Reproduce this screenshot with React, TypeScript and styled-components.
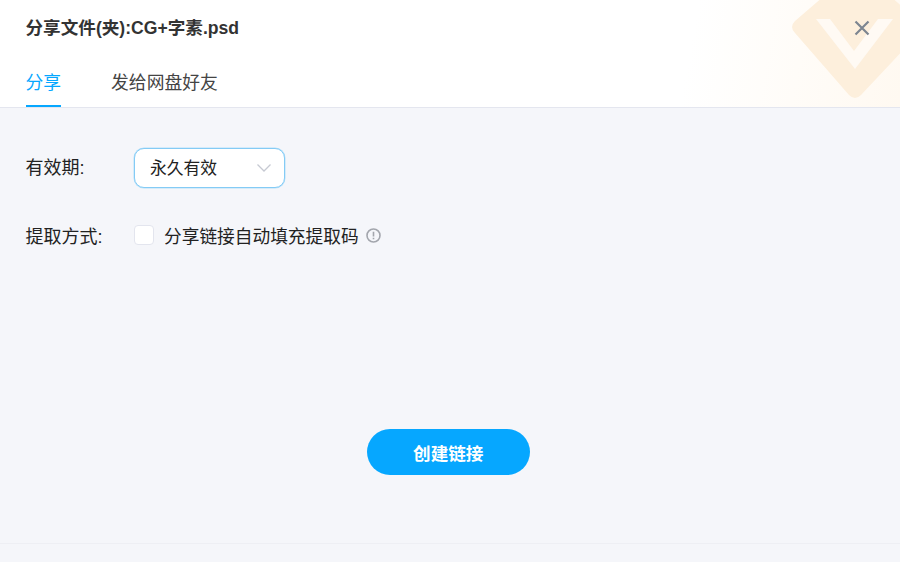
import React from "react";
import styled, { createGlobalStyle } from "styled-components";

const Global = createGlobalStyle`
  html, body { margin: 0; padding: 0; background: #f5f6fa; }
  body { font-family: "Liberation Sans", "Noto Sans CJK SC", sans-serif; }
`;

const Dialog = styled.div`
  width: 900px;
  height: 562px;
  display: flex;
  flex-direction: column;
  overflow: hidden;
  background: #f5f6fa;
`;

const Header = styled.header`
  position: relative;
  height: 107px;
  flex: none;
  border-bottom: 1px solid #e4e6ef;
  padding: 0 25.5px;
  background: linear-gradient(100deg, #ffffff 76%, #fff9f1 100%);
  overflow: hidden;
  display: flex;
  flex-direction: column;
`;

const Decoration = styled.svg`
  position: absolute;
  right: 0;
  top: 0;
`;

const Title = styled.h1`
  margin: 0;
  padding-top: 16px;
  height: 24px;
  line-height: 24px;
  font-size: 17.6px;
  font-weight: 700;
  color: #333333;
  position: relative;
`;

const CloseButton = styled.button`
  position: absolute;
  right: 29px;
  top: 19px;
  width: 18px;
  height: 18px;
  padding: 0;
  border: 0;
  background: none;
  display: flex;
`;

const Tabs = styled.nav`
  display: flex;
  gap: 50px;
  margin-top: 27px;
  position: relative;
`;

const Tab = styled.div<{ $active?: boolean }>`
  height: 40px;
  line-height: 32px;
  box-sizing: border-box;
  font-size: 17.8px;
  color: ${(p) => (p.$active ? "#06a7ff" : "#444444")};
  border-bottom: 2px solid ${(p) => (p.$active ? "#06a7ff" : "transparent")};
`;

const Body = styled.main`
  flex: 1;
  padding: 40px 29px 0 25.5px;
  display: flex;
  flex-direction: column;
`;

const Row = styled.div<{ $gap: number }>`
  display: flex;
  align-items: center;
  margin-bottom: ${(p) => p.$gap}px;
`;

const Label = styled.div<{ $lift: number }>`
  width: 108.5px;
  flex: none;
  font-size: 18px;
  color: #222222;
  padding-bottom: ${(p) => p.$lift}px;
`;

const Select = styled.div`
  width: 151px;
  height: 40px;
  box-sizing: border-box;
  border: 1px solid #84cbf5;
  box-shadow: 0 0 0 0.5px #b5e0fa;
  border-radius: 10px;
  background: #ffffff;
  padding: 0 12px 0 15px;
  display: flex;
  align-items: center;
  justify-content: space-between;
  font-size: 16.8px;
  color: #222222;
`;

const SelectValue = styled.span`
  padding-bottom: 2px;
`;

const Checkbox = styled.span`
  width: 20px;
  height: 20px;
  box-sizing: border-box;
  border: 1px solid #e3e5ee;
  border-radius: 4px;
  background: #ffffff;
  margin-right: 10px;
  flex: none;
`;

const CheckText = styled.span`
  font-size: 17.7px;
  color: #222222;
  margin-right: 7px;
`;

const InfoIcon = styled.svg`
  flex: none;
`;

const Actions = styled.div`
  display: flex;
  justify-content: center;
  padding-top: 181px;
`;

const Primary = styled.button`
  width: 163px;
  height: 46px;
  border: 0;
  border-radius: 23px;
  background: #06a7ff;
  color: #ffffff;
  font-family: inherit;
  font-size: 17.6px;
  font-weight: 700;
`;

const Footer = styled.footer`
  height: 18px;
  flex: none;
  border-top: 1px solid #eeeff4;
`;

export default function App() {
  return (
    <Dialog>
      <Global />
      <Header>
        <Decoration width="110" height="107" viewBox="790 0 110 107">
          <path
            d="M845 -22 L795 21 Q789 27 795 33 L849 95 Q855 101 861 95 L925 27 L870 -22 Z"
            fill="#fdefdc"
          />
          <path d="M816 19 L830 19 L854 51 L878 19 L893 19 L855 69 Z" fill="#fffaf4" />
        </Decoration>
        <Title>分享文件(夹):CG+字素.psd</Title>
        <CloseButton aria-label="关闭">
          <svg width="18" height="18" viewBox="0 0 18 18">
            <path d="M2.5 2.5 L15.5 15.5 M15.5 2.5 L2.5 15.5" stroke="#7d8590" strokeWidth="2.2" fill="none" />
          </svg>
        </CloseButton>
        <Tabs>
          <Tab $active>分享</Tab>
          <Tab>发给网盘好友</Tab>
        </Tabs>
      </Header>
      <Body>
        <Row $gap={34}>
          <Label $lift={4}>有效期:</Label>
          <Select>
            <SelectValue>永久有效</SelectValue>
            <svg width="16" height="10" viewBox="0 0 16 10">
              <path d="M1.5 1.5 L8 8 L14.5 1.5" stroke="#c6c9d2" strokeWidth="1.3" fill="none" />
            </svg>
          </Select>
        </Row>
        <Row $gap={0}>
          <Label $lift={0}>提取方式:</Label>
          <Checkbox />
          <CheckText>分享链接自动填充提取码</CheckText>
          <InfoIcon width="15" height="15" viewBox="0 0 15 15">
            <circle cx="7.5" cy="7.5" r="6.5" stroke="#a3a6ad" strokeWidth="1.6" fill="none" />
            <path d="M7.5 3.8 V8.4 M7.5 9.8 V11.2" stroke="#a3a6ad" strokeWidth="1.6" fill="none" />
          </InfoIcon>
        </Row>
        <Actions>
          <Primary>创建链接</Primary>
        </Actions>
      </Body>
      <Footer />
    </Dialog>
  );
}
